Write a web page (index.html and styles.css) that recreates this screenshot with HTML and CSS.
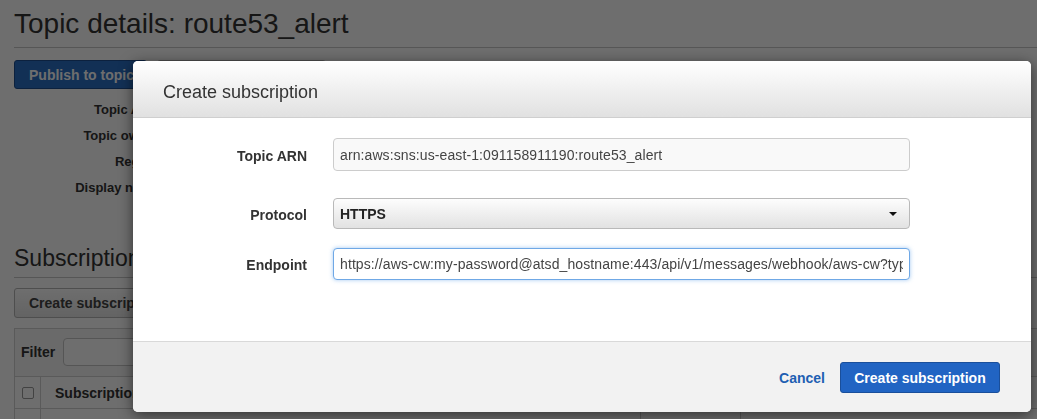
FILE: index.html
```html
<!DOCTYPE html>
<html>
<head>
<meta charset="utf-8">
<link rel="stylesheet" href="styles.css">
</head>
<body>
<div class="page">
  <h1 class="page-title">Topic details: route53_alert</h1>
  <div class="actions">
    <button class="btn btn-primary">Publish to topic</button>
    <button class="btn btn-default btn-wide"></button>
  </div>
  <div class="details">
    <div class="d-label">Topic ARN</div><div class="d-value"></div>
    <div class="d-label">Topic owner</div><div class="d-value"></div>
    <div class="d-label">Region</div><div class="d-value"></div>
    <div class="d-label">Display name</div><div class="d-value"></div>
  </div>
  <h2 class="section-title">Subscriptions</h2>
  <div class="actions2">
    <button class="btn btn-default">Create subscription</button>
  </div>
  <div class="panel">
    <div class="filter-row">
      <span class="filter-label">Filter</span>
      <span class="filter-input"></span>
    </div>
    <div class="table-head">
      <div class="th th-check"><span class="checkbox"></span></div>
      <div class="th th-id">Subscription ID</div>
      <div class="th th-proto"></div>
      <div class="th th-end"></div>
    </div>
    <div class="table-row">
      <div class="td th-check"></div>
      <div class="td th-id"></div>
      <div class="td th-proto"></div>
      <div class="td th-end"></div>
    </div>
  </div>
</div>

<div class="overlay"></div>

<div class="modal">
  <div class="modal-header">Create subscription</div>
  <div class="modal-body">
    <div class="form-row row-arn">
      <label class="f-label">Topic ARN</label>
      <input class="f-input f-readonly" type="text" value="arn:aws:sns:us-east-1:091158911190:route53_alert" readonly>
    </div>
    <div class="form-row row-proto">
      <label class="f-label">Protocol</label>
      <div class="f-select"><span>HTTPS</span><span class="caret"></span></div>
    </div>
    <div class="form-row row-end">
      <label class="f-label">Endpoint</label>
      <input class="f-input f-focus" type="text" value="https://aws-cw:my-password@atsd_hostname:443/api/v1/messages/webhook/aws-cw?type=sns">
    </div>
  </div>
  <div class="modal-footer">
    <a class="cancel">Cancel</a>
    <button class="btn-create">Create subscription</button>
  </div>
</div>
</body>
</html>
```
FILE: styles.css
```css
* { box-sizing: border-box; }
html, body {
  margin: 0;
  padding: 0;
  width: 1037px;
  height: 419px;
  overflow: hidden;
  background: #ffffff;
  font-family: "Liberation Sans", Arial, sans-serif;
  color: #333;
}

.page {
  padding-left: 14px;
}

.page-title {
  margin: 0;
  padding-top: 8px;
  padding-bottom: 7px;
  font-size: 28px;
  line-height: 32px;
  font-weight: normal;
  color: #333;
  border-bottom: 1px solid #c8c8c8;
}

.actions {
  display: flex;
  gap: 10px;
  margin-top: 12px;
}

.btn {
  height: 29px;
  padding: 0 14px;
  border-radius: 3px;
  font-family: "Liberation Sans", Arial, sans-serif;
  font-size: 14px;
  font-weight: bold;
  text-align: left;
  white-space: nowrap;
}
.btn-primary {
  width: 133px;
  background: #2a6fc5;
  border: 1px solid #1c4e91;
  color: #fff;
}
.btn-default {
  background: linear-gradient(#ffffff, #e6e6e6);
  border: 1px solid #b5b5b5;
  color: #444;
}
.btn-wide { width: 169px; }

.details {
  display: grid;
  grid-template-columns: 145px 1fr;
  grid-auto-rows: 26px;
  column-gap: 14px;
  margin-top: 7px;
  align-items: center;
  font-size: 13px;
}
.d-label {
  text-align: right;
  font-weight: bold;
  color: #333;
  white-space: nowrap;
}
.d-value { color: #444; }

.section-title {
  margin: 44px 0 0;
  font-size: 23px;
  line-height: 28px;
  font-weight: normal;
  color: #333;
  padding-bottom: 5px;
  border-bottom: 1px solid #c8c8c8;
}

.actions2 { margin-top: 10px; }
.actions2 .btn { height: 30px; }

.panel {
  margin-top: 10px;
  border: 1px solid #d0d0d0;
  border-right: none;
  background: #f5f5f5;
}
.filter-row {
  display: flex;
  align-items: center;
  gap: 8px;
  padding: 9px 6px 10px;
}
.filter-label {
  font-size: 14px;
  font-weight: bold;
  color: #333;
}
.filter-input {
  width: 300px;
  height: 28px;
  border: 1px solid #c6c6c6;
  border-radius: 4px;
  background: #fff;
}
.table-head, .table-row {
  display: flex;
  border-top: 1px solid #d0d0d0;
  background: #fff;
}
.table-head { height: 32px; }
.table-row { height: 20px; }
.th {
  display: flex;
  align-items: center;
  font-size: 14px;
  font-weight: bold;
  color: #333;
  white-space: nowrap;
}
.th-check {
  width: 26px;
  justify-content: center;
  border-right: 1px solid #d0d0d0;
}
.th-id { width: 600px; padding-left: 14px; border-right: 1px solid #d0d0d0; }
.th-proto { width: 100px; padding-left: 14px; border-right: 1px solid #d0d0d0; }
.th-end { flex: 1; padding-left: 14px; }
.td.th-check, .td.th-id, .td.th-proto { border-right: 1px solid #d0d0d0; }
.checkbox {
  width: 12px;
  height: 12px;
  border: 1px solid #999;
  border-radius: 2px;
  background: #fff;
}

.overlay {
  position: fixed;
  inset: 0;
  background: rgba(0, 0, 0, 0.57);
}

.modal {
  position: absolute;
  left: 133px;
  top: 61px;
  width: 898px;
  height: 351px;
  display: flex;
  flex-direction: column;
  background: #fff;
  border-radius: 5px;
  overflow: hidden;
  box-shadow: 0 3px 14px rgba(0, 0, 0, 0.55);
}

.modal-header {
  height: 57px;
  padding-left: 30px;
  padding-top: 6px;
  display: flex;
  align-items: center;
  font-size: 18px;
  color: #333;
  background: linear-gradient(#ffffff, #e1e1e1);
  border-bottom: 1px solid #cfcfcf;
}

.modal-body {
  flex: 1;
  padding-top: 20px;
}

.form-row {
  display: grid;
  grid-template-columns: 174px 577px;
  column-gap: 26px;
  align-items: center;
}
.row-proto { margin-top: 27px; }
.row-end { margin-top: 19px; }

.f-label {
  text-align: right;
  font-size: 14px;
  font-weight: bold;
  color: #333;
  padding-top: 2px;
}

.f-input {
  height: 33px;
  width: 577px;
  padding: 0 6px;
  font-family: "Liberation Sans", Arial, sans-serif;
  font-size: 14px;
  letter-spacing: 0.1px;
  color: #444;
  border-radius: 4px;
  outline: none;
}
.f-readonly {
  background: #f9f9f9;
  border: 1px solid #cccccc;
}
.f-focus {
  height: 32px;
  background: #fff;
  border: 1px solid #6fa8e6;
  box-shadow: 0 0 4px rgba(102, 165, 233, 0.6);
}

.f-select {
  position: relative;
  height: 31px;
  display: flex;
  align-items: center;
  padding-left: 6px;
  font-size: 14px;
  font-weight: bold;
  color: #222;
  background: linear-gradient(#fdfdfd, #e2e2e2);
  border: 1px solid #b9b9b9;
  border-radius: 4px;
}
.caret {
  position: absolute;
  right: 12px;
  top: 13px;
  width: 0;
  height: 0;
  border-left: 4px solid transparent;
  border-right: 4px solid transparent;
  border-top: 4px solid #111;
}

.modal-footer {
  height: 71px;
  display: flex;
  align-items: center;
  justify-content: flex-end;
  gap: 15px;
  padding-right: 31px;
  padding-top: 1px;
  background: #f2f2f2;
  border-top: 1px solid #d9d9d9;
}
.cancel {
  font-size: 14px;
  font-weight: bold;
  color: #1e5fb2;
  cursor: pointer;
}
.btn-create {
  width: 160px;
  height: 31px;
  padding: 0;
  border-radius: 3px;
  background: #2164c3;
  border: 1px solid #1a4f9b;
  color: #fff;
  font-family: "Liberation Sans", Arial, sans-serif;
  font-size: 14px;
  font-weight: bold;
}
```
